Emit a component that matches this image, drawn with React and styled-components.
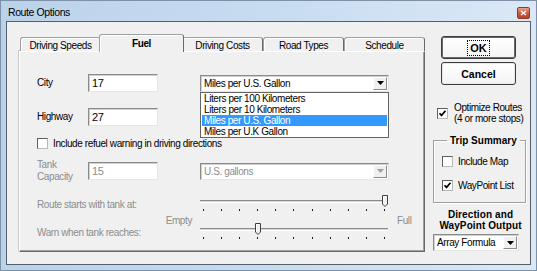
import React from "react";
import styled, { createGlobalStyle } from "styled-components";

const GlobalStyle = createGlobalStyle`
  html, body {
    margin: 0;
    padding: 0;
  }
  body {
    font-family: "Liberation Sans", Arial, sans-serif;
    font-size: 10px;
    letter-spacing: -0.4px;
    color: #000;
    overflow: hidden;
  }
  * {
    box-sizing: border-box;
  }
`;

const tabs = ["Driving Speeds", "Fuel", "Driving Costs", "Road Types", "Schedule"];
const fuelUnits = [
  "Liters per 100 Kilometers",
  "Liters per 10 Kilometers",
  "Miles per U.S. Gallon",
  "Miles per U.K Gallon",
];

function Check({ checked }) {
  return (
    <CheckBox>
      {checked && (
        <svg width="9" height="9" viewBox="0 0 9 9">
          <path d="M1.5 4.2 L3.5 6.4 L7.5 1.8" fill="none" stroke="#000" strokeWidth="1.7" />
        </svg>
      )}
    </CheckBox>
  );
}

function Combo({ value, disabled, open, width }) {
  return (
    <ComboBox $width={width}>
      <ComboText $disabled={disabled}>{value}</ComboText>
      <ArrowButton>
        <svg width="7" height="4" viewBox="0 0 7 4">
          <path d="M0 0 H7 L3.5 4 Z" fill={disabled ? "#a0a0a0" : "#000"} />
        </svg>
      </ArrowButton>
      {open && (
        <DropList>
          {fuelUnits.map((u) => (
            <DropItem key={u} $active={u === value}>
              {u}
            </DropItem>
          ))}
        </DropList>
      )}
    </ComboBox>
  );
}

function Slider({ value }) {
  // 0..10 steps, ticks 18.1px apart
  const x = 3 + value * 18.1 - 2;
  return (
    <SliderBox>
      <Track />
      <Ticks>
        {Array.from({ length: 11 }).map((_, i) => (
          <Tick key={i} />
        ))}
      </Ticks>
      <Thumb style={{ left: x }} width="6" height="12" viewBox="0 0 6 12">
        <path d="M0.5 0.5 H5.5 V9 L3 11.5 L0.5 9 Z" fill="#f0f0f0" stroke="#404040" />
        <path d="M1.5 9 V1.5 H4.5" fill="none" stroke="#fff" />
      </Thumb>
    </SliderBox>
  );
}

function App() {
  return (
    <>
      <GlobalStyle />
      <Window>
        <TitleBar>
          <Title>Route Options</Title>
          <CloseButton>
            <svg width="7" height="6" viewBox="0 0 7 6">
              <path d="M1 1 L6 5 M6 1 L1 5" stroke="#fff" strokeWidth="1.5" />
            </svg>
          </CloseButton>
        </TitleBar>
        <Client>
          <LeftColumn>
            <TabStrip>
              {tabs.map((t) => (
                <Tab key={t} $active={t === "Fuel"}>
                  {t}
                </Tab>
              ))}
            </TabStrip>
            <Panel>
              <FieldRow>
                <Label>City</Label>
                <TextBox>17</TextBox>
                <ComboSlot>
                  <Combo value="Miles per U.S. Gallon" width={189} open />
                </ComboSlot>
              </FieldRow>
              <FieldRow $top={16}>
                <Label>Highway</Label>
                <TextBox>27</TextBox>
              </FieldRow>
              <CheckRow $top={11}>
                <Check />
                <span>Include refuel warning in driving directions</span>
              </CheckRow>
              <FieldRow $top={13}>
                <Label $disabled>
                  Tank
                  <br />
                  Capacity
                </Label>
                <TextBox $disabled>15</TextBox>
                <ComboSlot>
                  <Combo value="U.S. gallons" width={189} disabled />
                </ComboSlot>
              </FieldRow>
              <SliderGrid>
                <GreyText>Route starts with tank at:</GreyText>
                <Slider value={10} />
                <span />
                <EndLabel $align="right">Empty</EndLabel>
                <span />
                <EndLabel $align="left">Full</EndLabel>
                <GreyText>Warn when tank reaches:</GreyText>
                <Slider value={3} />
              </SliderGrid>
            </Panel>
          </LeftColumn>
          <RightColumn>
            <PushButton $default>
              <Focus>OK</Focus>
            </PushButton>
            <PushButton $top={3}>Cancel</PushButton>
            <OptimizeRow>
              <Check checked />
              <span>
                Optimize Routes
                <br />
                (4 or more stops)
              </span>
            </OptimizeRow>
            <Group>
              <Legend>Trip Summary</Legend>
              <CheckRow $top={5}>
                <Check />
                <span>Include Map</span>
              </CheckRow>
              <CheckRow $top={12}>
                <Check checked />
                <span>WayPoint List</span>
              </CheckRow>
            </Group>
            <OutputTitle>
              Direction and
              <br />
              WayPoint Output
            </OutputTitle>
            <Combo value="Array Formula" width={86} />
          </RightColumn>
        </Client>
      </Window>
    </>
  );
}

const Window = styled.div`
  width: 537px;
  height: 271px;
  display: flex;
  flex-direction: column;
  border: 1px solid #7f91a6;
  background: linear-gradient(90deg, #bad2ea 0%, #c9ddf1 55%, #dbe8f6 100%);
`;

const TitleBar = styled.div`
  height: 20px;
  flex: none;
  display: flex;
  align-items: center;
  justify-content: space-between;
  padding: 0 6px 0 7px;
`;

const Title = styled.span`
  font-size: 10.5px;
  letter-spacing: -0.4px;
  padding-top: 2px;
`;

const CloseButton = styled.div`
  width: 13px;
  height: 12px;
  margin-top: 4px;
  border: 1px solid #8a3b2c;
  border-radius: 2px;
  background: linear-gradient(#e6a48e, #cc563e 55%, #b8402a);
  display: flex;
  align-items: center;
  justify-content: center;
`;

const Client = styled.div`
  flex: 1;
  margin: 0 5px 5px 5px;
  border: 1px solid #55606c;
  background: #f0f0f0;
  display: flex;
  gap: 8px;
  padding: 12px 2px 0 12px;
`;

const LeftColumn = styled.div`
  width: 407px;
  display: flex;
  flex-direction: column;
`;

const TabStrip = styled.div`
  height: 17px;
  display: flex;
  align-items: flex-end;
  padding-left: 1px;
`;

const Tab = styled.div`
  position: relative;
  width: ${(p) => (p.$active ? 85 : 81)}px;
  height: ${(p) => (p.$active ? 18 : 14)}px;
  margin: 0 ${(p) => (p.$active ? -2 : 0)}px ${(p) => (p.$active ? -1 : 0)}px;
  z-index: ${(p) => (p.$active ? 1 : 0)};
  display: flex;
  align-items: center;
  justify-content: center;
  padding: ${(p) => (p.$active ? "0 0 1px" : "1px 0 0")};
  background: #f0f0f0;
  border: 1px solid #a0a0a0;
  border-right-color: #6a6a6a;
  border-bottom: none;
  border-radius: 3px 3px 0 0;
  box-shadow: inset 1px 1px 0 #fff;
  font-weight: ${(p) => (p.$active ? "bold" : "normal")};
`;

const Panel = styled.div`
  height: 201px;
  border: 1px solid;
  border-color: #fff #696969 #696969 #fff;
  box-shadow: inset -1px -1px 0 #a0a0a0, -1px -1px 0 #c8c8c8;
  padding: 22px 0 0 17px;
  display: flex;
  flex-direction: column;
`;

const FieldRow = styled.div`
  display: flex;
  align-items: center;
  height: 18px;
  margin-top: ${(p) => p.$top || 0}px;
`;

const Label = styled.div`
  width: 51px;
  line-height: 12px;
  color: ${(p) => (p.$disabled ? "#8d8d8d" : "#000")};
`;

const TextBox = styled.div`
  width: 70px;
  height: 18px;
  padding: 2px 0 0 3px;
  background: #fff;
  border: 1px solid;
  border-color: #8a8a8a #e6e6e6 #e6e6e6 #8a8a8a;
  box-shadow: inset 1px 1px 0 #d0d0d0;
  font-size: 11px;
  color: ${(p) => (p.$disabled ? "#8d8d8d" : "#000")};
`;

const ComboSlot = styled.div`
  margin-left: 42px;
`;

const ComboBox = styled.div`
  position: relative;
  width: ${(p) => p.$width}px;
  height: 17px;
  display: flex;
  align-items: center;
  background: #fff;
  border: 1px solid;
  border-color: #8a8a8a #e6e6e6 #e6e6e6 #8a8a8a;
  box-shadow: inset 1px 1px 0 #d0d0d0;
`;

const ComboText = styled.div`
  flex: 1;
  padding-left: 3px;
  white-space: nowrap;
  overflow: hidden;
  color: ${(p) => (p.$disabled ? "#8d8d8d" : "#000")};
`;

const ArrowButton = styled.div`
  width: 14px;
  height: 13px;
  margin-right: 1px;
  display: flex;
  align-items: center;
  justify-content: center;
  background: #f0f0f0;
  border: 1px solid;
  border-color: #fff #8a8a8a #8a8a8a #fff;
`;

const DropList = styled.div`
  position: absolute;
  left: -1px;
  right: -1px;
  top: 16px;
  z-index: 5;
  background: #fff;
  border: 1px solid #646464;
  padding: 0 1px;
`;

const DropItem = styled.div`
  height: 11px;
  line-height: 11px;
  padding-left: 2px;
  white-space: nowrap;
  background: ${(p) => (p.$active ? "#3399ff" : "transparent")};
  color: ${(p) => (p.$active ? "#fff" : "#000")};
`;

const CheckRow = styled.div`
  display: flex;
  align-items: center;
  gap: 5px;
  height: 12px;
  margin-top: ${(p) => p.$top || 0}px;
`;

const CheckBox = styled.span`
  flex: none;
  width: 11px;
  height: 11px;
  display: flex;
  align-items: center;
  justify-content: center;
  background: #fff;
  border: 1px solid;
  border-color: #5e5e5e #b8b8b8 #b8b8b8 #5e5e5e;
`;

const SliderGrid = styled.div`
  margin-top: 14px;
  display: grid;
  grid-template-columns: 163px 188px auto;
  grid-template-rows: 20px 8px 20px;
  align-items: center;
`;

const GreyText = styled.div`
  color: #8d8d8d;
  white-space: nowrap;
`;

const EndLabel = styled.div`
  align-self: start;
  height: 12px;
  line-height: 12px;
  padding-top: 1px;
  color: #8d8d8d;
  text-align: ${(p) => p.$align};
  padding-right: ${(p) => (p.$align === "right" ? 8 : 0)}px;
  padding-left: ${(p) => (p.$align === "left" ? 9 : 0)}px;
`;

const SliderBox = styled.div`
  position: relative;
  width: 188px;
  height: 20px;
`;

const Track = styled.div`
  position: absolute;
  left: 0;
  right: 0;
  top: 6px;
  height: 3px;
  background: #d8d8d8;
  border-top: 1px solid #8a8a8a;
  border-bottom: 1px solid #fff;
`;

const Ticks = styled.div`
  position: absolute;
  left: 3px;
  right: 3px;
  top: 15px;
  display: flex;
  justify-content: space-between;
`;

const Tick = styled.span`
  width: 1px;
  height: 2px;
  background: #202020;
`;

const Thumb = styled.svg`
  position: absolute;
  top: 1px;
`;

const RightColumn = styled.div`
  width: 96px;
  display: flex;
  flex-direction: column;
  padding-top: 2px;
`;

const PushButton = styled.div`
  width: 75px;
  height: 23px;
  margin: ${(p) => p.$top || 0}px 0 0 8px;
  display: flex;
  align-items: center;
  justify-content: center;
  background: linear-gradient(#ffffff, #f4f4f4);
  border: 1px solid #3c3c3c;
  border-radius: 3px;
  box-shadow: ${(p) => (p.$default ? "inset 0 0 0 1px #6a6a6a" : "inset 0 0 0 1px #e8e8e8")};
  font-weight: bold;
  font-size: 10.5px;
  letter-spacing: 0;
`;

const Focus = styled.span`
  outline: 1px dotted #000;
  padding: 1px 2px;
  font-size: 11px;
`;

const OptimizeRow = styled.div`
  display: flex;
  align-items: center;
  gap: 6px;
  margin: 17px 0 0 4px;
  line-height: 11px;
`;

const Group = styled.fieldset`
  margin: 11px 2px 0 0;
  padding: 4px 0 11px 8px;
  border: 1px solid #a0a0a0;
  box-shadow: 1px 1px 0 #fff, inset 1px 1px 0 #fff;
  min-width: 0;
`;

const Legend = styled.legend`
  margin-left: 5px;
  padding: 0 3px;
  font-weight: bold;
  letter-spacing: 0;
`;

const OutputTitle = styled.div`
  margin-top: 6px;
  text-align: center;
  font-weight: bold;
  line-height: 11px;
  letter-spacing: 0.1px;
  margin-bottom: 3px;
`;

export default App;
